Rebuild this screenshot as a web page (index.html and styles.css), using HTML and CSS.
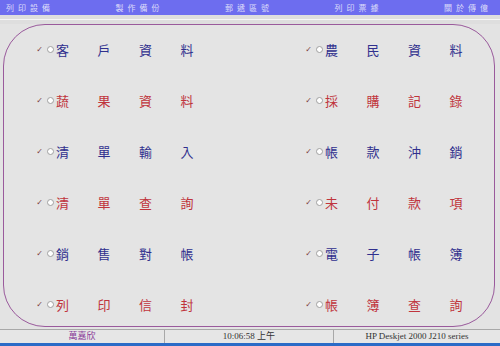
FILE: index.html
```html
<!DOCTYPE html>
<html lang="zh-Hant">
<head>
    <meta charset="UTF-8">
    <title>主選單</title>
    <link rel="stylesheet" href="styles.css">
</head>
<body>

    <div class="menubar">
        <span class="menu-item">列印設備</span>
        <span class="menu-item">製作備份</span>
        <span class="menu-item">郵遞區號</span>
        <span class="menu-item">列印票據</span>
        <span class="menu-item">關於傳億</span>
    </div>
    <div class="band"><div class="band-line"></div></div>

    <div class="panel">
        <div class="grid">
            <div class="item blue"><span class="check">✓</span><span class="radio"></span><span>客</span><span>戶</span><span>資</span><span>料</span></div>
            <div class="item blue"><span class="check">✓</span><span class="radio"></span><span>農</span><span>民</span><span>資</span><span>料</span></div>

            <div class="item red"><span class="check">✓</span><span class="radio"></span><span>蔬</span><span>果</span><span>資</span><span>料</span></div>
            <div class="item red"><span class="check">✓</span><span class="radio"></span><span>採</span><span>購</span><span>記</span><span>錄</span></div>

            <div class="item blue"><span class="check">✓</span><span class="radio"></span><span>清</span><span>單</span><span>輸</span><span>入</span></div>
            <div class="item blue"><span class="check">✓</span><span class="radio"></span><span>帳</span><span>款</span><span>沖</span><span>銷</span></div>

            <div class="item red"><span class="check">✓</span><span class="radio"></span><span>清</span><span>單</span><span>查</span><span>詢</span></div>
            <div class="item red"><span class="check">✓</span><span class="radio"></span><span>未</span><span>付</span><span>款</span><span>項</span></div>

            <div class="item blue"><span class="check">✓</span><span class="radio"></span><span>銷</span><span>售</span><span>對</span><span>帳</span></div>
            <div class="item blue"><span class="check">✓</span><span class="radio"></span><span>電</span><span>子</span><span>帳</span><span>簿</span></div>

            <div class="item red"><span class="check">✓</span><span class="radio"></span><span>列</span><span>印</span><span>信</span><span>封</span></div>
            <div class="item red"><span class="check">✓</span><span class="radio"></span><span>帳</span><span>簿</span><span>查</span><span>詢</span></div>
        </div>
    </div>

    <div class="statusbar">
        <div class="status user">萬嘉欣</div>
        <div class="status">10:06:58 上午</div>
        <div class="status">HP Deskjet 2000 J210 series</div>
    </div>
    <div class="taskbar"></div>

</body>
</html>
```

FILE: styles.css
```css
body {
    margin: 0;
    width: 500px;
    height: 346px;
    overflow: hidden;
    background-color: #e3e3e3;
    font-family: "Noto Sans CJK TC", sans-serif;
}

.menubar {
    height: 15px;
    background-color: #6d6def;
    display: flex;
    justify-content: space-between;
    align-items: center;
    padding: 0 8px 0 6px;
}

.menu-item {
    color: #dcdcfa;
    font-size: 8px;
    letter-spacing: 4px;
    line-height: 15px;
}

.band {
    height: 9px;
    background-color: #dedede;
    padding-top: 4px;
    box-sizing: border-box;
}

.band-line {
    height: 1px;
    background-color: #f6f6f6;
}

.panel {
    margin-left: 3px;
    width: 492px;
    height: 303px;
    box-sizing: border-box;
    border: 1px solid #9a5a9c;
    border-radius: 42px;
    background-color: #e4e4e4;
}

.grid {
    display: grid;
    grid-template-columns: 269px 1fr;
    grid-auto-rows: 51px;
    padding-left: 29px;
    margin-top: -1px;
}

.item {
    display: flex;
    align-items: center;
    font-size: 13px;
}

.item span {
    width: 41.5px;
}

.item .check {
    width: 13px;
    font-size: 8px;
    color: #7a3a3a;
    text-align: center;
    font-family: "DejaVu Sans", sans-serif;
}

.item .radio {
    width: 5px;
    height: 5px;
    border: 1px solid #a0a0a0;
    border-radius: 50%;
    background-color: #ffffff;
    margin: 0 2px 0 1px;
}

.blue { color: #30308e; }
.red { color: #c0343c; }

.statusbar {
    margin-top: 2px;
    height: 14px;
    display: flex;
    border-top: 1px solid #a8a8a8;
    box-sizing: border-box;
    background-color: #e6e6e6;
}

.status {
    flex: 0 0 168px;
    text-align: center;
    font-family: "Liberation Serif", "Noto Sans CJK TC", serif;
    font-size: 9px;
    line-height: 13px;
    color: #333333;
    border-right: 1px solid #a8a8a8;
}

.status:first-child {
    flex-basis: 164px;
}

.status:last-child {
    flex: 1;
    border-right: none;
}

.user {
    color: #8a3e9a;
}

.taskbar {
    height: 3px;
    background-color: #2a6bc7;
}
```
